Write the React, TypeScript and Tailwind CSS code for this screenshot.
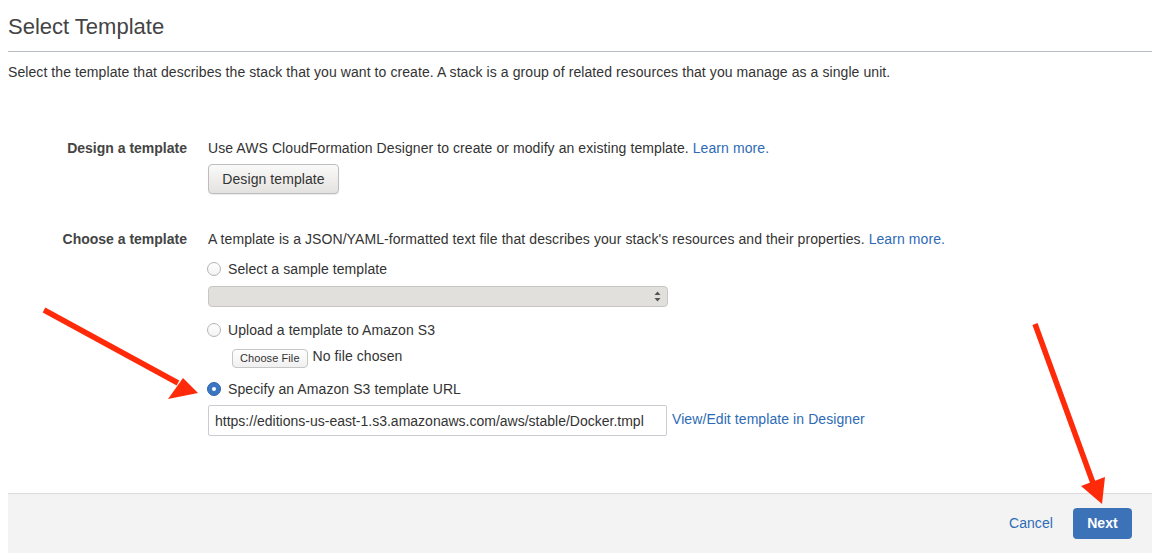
import React from 'react';

const font = { fontFamily: '"Liberation Sans", Arial, sans-serif' };

function Radio({ checked, label }: { checked?: boolean; label: string }) {
  return (
    <label className="flex items-center h-[20px] leading-[20px] text-[14px] text-[#333]">
      {checked ? (
        <span className="ml-[-1px] w-[14px] h-[14px] rounded-full bg-[#3a76c2] border border-[#2f63a8] flex items-center justify-center">
          <span className="w-[4px] h-[4px] rounded-full bg-white" />
        </span>
      ) : (
        <span className="ml-[-1px] w-[14px] h-[14px] rounded-full border border-[#b4b4b4] bg-gradient-to-b from-white to-[#f2f2f2]" />
      )}
      <span className="ml-[7px]">{label}</span>
    </label>
  );
}

function Arrows() {
  return (
    <svg className="absolute left-0 top-0 pointer-events-none" width="1158" height="559" viewBox="0 0 1158 559">
      <line x1="44" y1="310" x2="178" y2="383" stroke="#ff2a0a" strokeWidth="5.5" strokeLinecap="butt" />
      <polygon points="168,399 183,378 198,393" fill="#ff2a0a" />
      <line x1="1035" y1="324" x2="1093" y2="483" stroke="#ff2a0a" strokeWidth="5.5" strokeLinecap="butt" />
      <polygon points="1081,486 1105,477 1102,504" fill="#ff2a0a" />
    </svg>
  );
}

export default function App() {
  return (
    <div className="relative w-[1158px] h-[559px] bg-white overflow-hidden tracking-[0.08px]" style={font}>
      <div className="pl-[8px] pr-[6px]">
        <h1 className="pt-[14px] pb-[11px] text-[22px] leading-[26px] tracking-normal text-[#444] border-b border-[#b9bec4]">
          Select Template
        </h1>
        <p className="mt-[10px] text-[14px] leading-[20px] text-[#333]">
          Select the template that describes the stack that you want to create. A stack is a group of related resources that you manage as a single unit.
        </p>

        <div className="mt-[56px] grid grid-cols-[179px_1fr] gap-x-[21px] text-[14px] leading-[20px] text-[#333]">
          <div className="text-right font-bold text-[#444] tracking-normal">Design a template</div>
          <div>
            <div>
              Use AWS CloudFormation Designer to create or modify an existing template.{' '}
              <a className="text-[#2d6bb5]">Learn more.</a>
            </div>
            <button className="mt-[6px] h-[30px] w-[131px] rounded-[4px] border border-[#bdbdbd] bg-gradient-to-b from-[#fafafa] to-[#e4e2df] text-[14px] text-[#333] shadow-[0_1px_1px_rgba(0,0,0,0.08)]">
              Design template
            </button>
          </div>

          <div className="mt-[35px] text-right font-bold text-[#444] tracking-normal">Choose a template</div>
          <div className="mt-[35px]">
            <div>
              A template is a JSON/YAML-formatted text file that describes your stack's resources and their properties.{' '}
              <a className="text-[#2d6bb5]">Learn more.</a>
            </div>
            <div className="mt-[10px]">
              <Radio label="Select a sample template" />
            </div>
            <div className="mt-[7px] w-[460px] h-[21px] rounded-[4px] border border-[#c8c6c3] bg-[#e2e0dd] flex items-center justify-end pr-[6px]">
              <svg width="7" height="11" viewBox="0 0 7 11">
                <polygon points="3.5,0.5 6.5,4 0.5,4" fill="#555" />
                <polygon points="0.5,7 6.5,7 3.5,10.5" fill="#555" />
              </svg>
            </div>
            <div className="mt-[13px]">
              <Radio label="Upload a template to Amazon S3" />
            </div>
            <div className="mt-[9px] pl-[24px] flex items-center h-[19px]">
              <button className="h-[19px] px-[7px] rounded-[4px] border border-[#c6c6c6] bg-gradient-to-b from-white to-[#f0f0f0] text-[11px] leading-[17px] text-[#333]">
                Choose File
              </button>
              <span className="ml-[5px] text-[14px] leading-[16px] -mt-[5px] text-[#333]">No file chosen</span>
            </div>
            <div className="mt-[11px]">
              <Radio checked label="Specify an Amazon S3 template URL" />
            </div>
            <div className="mt-[6px] flex items-center">
              <div className="w-[459px] h-[31px] border border-[#c9cdd2] rounded-[2px] flex items-center pl-[6px] text-[14px] text-[#333] whitespace-nowrap overflow-hidden tracking-normal">
                https://editions-us-east-1.s3.amazonaws.com/aws/stable/Docker.tmpl
              </div>
              <a className="ml-[5px] -mt-[3px] text-[#2d6bb5]">View/Edit template in Designer</a>
            </div>
          </div>
        </div>

        <div className="mt-[57px] h-[60px] bg-[#f3f3f3] border-t border-[#dcdcdc] flex items-center justify-end pr-[20px] gap-[20px]">
          <a className="text-[14px] text-[#2d6bb5]">Cancel</a>
          <button className="h-[31px] w-[59px] rounded-[4px] bg-[#3c73b8] text-white font-bold text-[14px]">
            Next
          </button>
        </div>
      </div>
      <Arrows />
    </div>
  );
}
